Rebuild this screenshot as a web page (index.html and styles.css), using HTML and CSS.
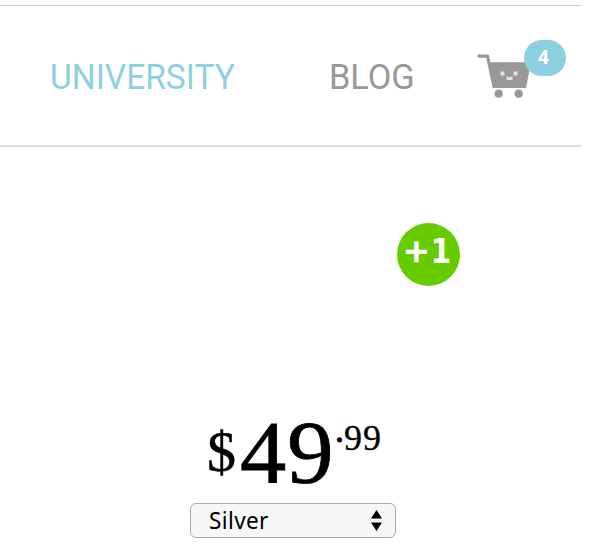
FILE: index.html
```html
<!DOCTYPE html>
<html lang="en">
<head>
<meta charset="utf-8">
<title>Shop</title>
<link rel="stylesheet" href="styles.css">
</head>
<body>
<header class="header">
  <nav class="nav">
    <a class="link university"><span>UNIVERSITY</span></a>
    <a class="link blog"><span>BLOG</span></a>
  </nav>
  <div class="cart">
    <svg class="cart-icon" width="54" height="46" viewBox="0 0 54 46">
      <path d="M2 3.2H10.5L17 33.5" fill="none" stroke="#999" stroke-width="3.2" stroke-linecap="round" stroke-linejoin="round"/>
      <path d="M13.2 10H53L48.5 34.3H16.5Z" fill="#999" stroke="#999" stroke-width="1.4" stroke-linejoin="round"/>
      <circle cx="21.7" cy="40.7" r="4.1" fill="#999"/>
      <circle cx="41.7" cy="40.7" r="4.1" fill="#999"/>
      <path d="M23.5 18.5h4v4h-4zM36.5 18.5h4v4h-4zM29.5 23l3 1.3 3-1.3v4h-6z" fill="#e4e4e4"/>
    </svg>
    <span class="badge">4</span>
  </div>
</header>
<main class="product">
  <div class="plus-one"><span class="plus">+</span><span class="one">1</span></div>
  <div class="price"><span class="currency">$</span><span class="whole">49</span><span class="dot">.</span><span class="cents">99</span></div>
  <div class="select">
    <span class="option">Silver</span>
    <svg width="11" height="21" viewBox="0 0 11 21"><path d="M0 8.5 5.5 0 11 8.5ZM0 12.5H11L5.5 21Z" fill="#000"/></svg>
  </div>
</main>
</body>
</html>
```

FILE: styles.css
```css
* { box-sizing: border-box; }
body { margin: 0; height: 547px; background: #fff; overflow: hidden; }
.header {
  width: 581px;
  height: 142px;
  margin-top: 5px;
  border-top: 1px solid #ccc;
  border-bottom: 2px solid #dcdcdc;
  display: flex;
}
.nav { display: flex; width: 477px; padding: 50px 0 0 50px; }
.link { font: 400 35px/44px Roboto, sans-serif; white-space: nowrap; }
.link span { display: inline-block; transform-origin: 0 50%; }
.university { width: 279px; color: #8dd1e1; }
.university span { transform: scaleX(.958); }
.blog { color: #999; }
.blog span { transform: scaleX(.98); }
.cart { position: relative; padding-top: 47px; }
.cart-icon { display: block; }
.badge {
  position: absolute;
  left: 47px;
  top: 34px;
  width: 42px;
  height: 36px;
  border-radius: 18px;
  background: #8dd1e1;
  color: #fff;
  font: 700 19px/34px "Open Sans", sans-serif;
  text-align: center;
  padding-right: 3px;
}
.product { display: flex; flex-direction: column; align-items: flex-start; }
.plus-one {
  display: flex;
  width: 63px;
  height: 63px;
  margin: 76px 0 0 397px;
  padding-left: 6px;
  border-radius: 50%;
  background: #6c0;
  color: #fff;
  font-family: "DejaVu Sans", sans-serif;
  font-weight: 700;
}
.plus { width: 26px; font-size: 32px; line-height: 57px; -webkit-text-stroke: .6px #fff; }
.one { font-size: 34px; line-height: 57px; transform: scaleX(.86); transform-origin: 50% 50%; }
.price {
  display: flex;
  height: 100px;
  margin: 117px 0 0 207px;
  font-family: "Liberation Serif", serif;
  color: #000;
}
.currency { width: 33px; font-size: 58px; line-height: 98px; -webkit-text-stroke: .5px #000; }
.whole {
  width: 95px;
  font-size: 89px;
  line-height: 98px;
  letter-spacing: 1px;
  transform: scaleX(1.04);
  transform-origin: 0 50%;
  -webkit-text-stroke: .8px #000;
}
.dot { width: 9px; font-size: 36px; line-height: 54px; -webkit-text-stroke: 1px #000; }
.cents { font-size: 36px; line-height: 71px; letter-spacing: 1px; -webkit-text-stroke: .3px #000; }
.select {
  width: 206px;
  height: 35px;
  margin: 0 0 0 190px;
  border: 1px solid #aaa;
  border-radius: 6px;
  background: #f7f7f7;
  display: flex;
  align-items: center;
  justify-content: space-between;
  padding: 0 13px 0 18px;
}
.option {
  font: 400 24px/31px "Noto Sans", sans-serif;
  letter-spacing: .4px;
  margin-top: -3px;
  transform: scaleX(.94);
  transform-origin: 0 50%;
}
```
